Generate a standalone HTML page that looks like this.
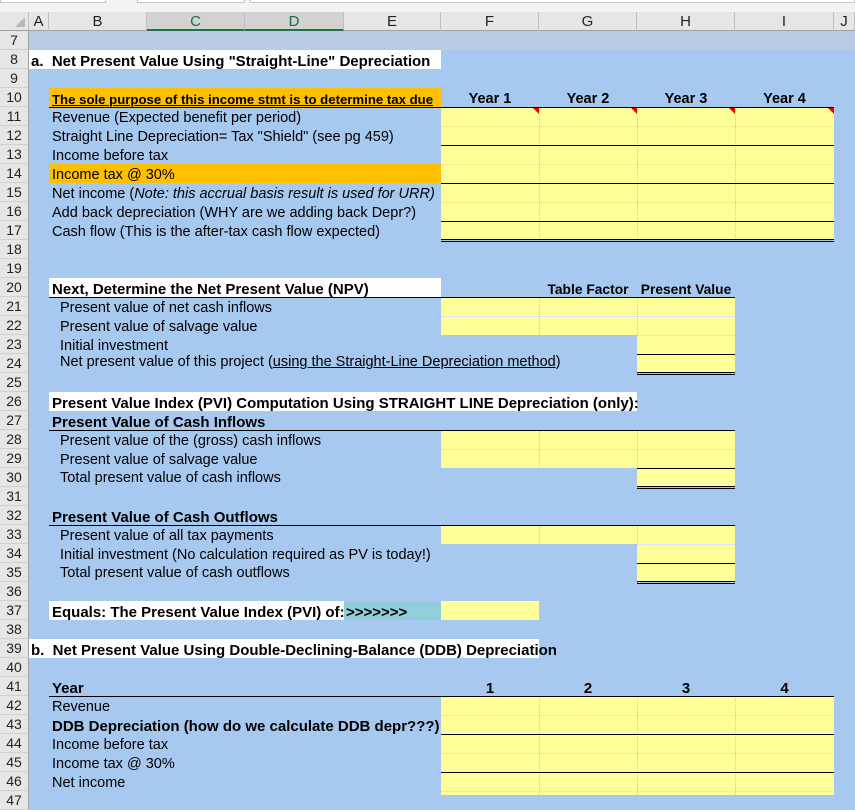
<!DOCTYPE html>
<html><head><meta charset="utf-8"><style>
*{margin:0;padding:0;box-sizing:border-box}
body{width:855px;height:795px;overflow:hidden;background:#a7c9ef;font-family:"Liberation Sans",Arial,sans-serif;position:relative;color:#000}
.a{position:absolute}
.t{position:absolute;font-size:14.5px;line-height:19px;white-space:nowrap;padding-top:2px}
.b{font-weight:bold;font-size:15px}
.y{position:absolute;background:#ffff99}
.w{position:absolute;background:#fff}
.hl{position:absolute;height:1px;background:#000}
.dl{position:absolute;height:1px;border-top:1px dotted #c8d8f0}
.vd{position:absolute;width:1px;border-left:1px dotted #c8c8c8}
.db{position:absolute;height:3px;border-top:1px solid #000;border-bottom:1px solid #000}
.rh{position:absolute;left:0;width:29px;height:19px;background:#e6e6e6;border-bottom:1px solid #d0d0d0;border-right:1px solid #a0a0a0;font-size:14px;line-height:19px;text-align:center;color:#222}
.ch{position:absolute;top:12px;height:19px;background:#e6e6e6;border-right:1px solid #c0c0c0;border-bottom:1px solid #a0a0a0;font-size:15px;line-height:19px;text-align:center;color:#222}
.tri{position:absolute;width:0;height:0;border-top:6px solid #e00;border-left:6px solid transparent}
</style></head><body>
<div class="a" style="left:0;top:0;width:855px;height:12px;background:#f3f3f3"></div>
<div class="a" style="left:0;top:0;width:106px;height:3px;background:#fff;border:1px solid #c8c8c8;border-top:none"></div>
<div class="a" style="left:137px;top:0;width:108px;height:3px;background:#fff;border:1px solid #c8c8c8;border-top:none"></div>
<div class="a" style="left:250px;top:0;width:605px;height:3px;background:#fff;border:1px solid #c8c8c8;border-top:none"></div>
<div class="ch" style="left:0;width:29px"><div class="a" style="right:3px;bottom:3px;width:0;height:0;border-bottom:10px solid #b8b8b8;border-left:10px solid transparent"></div></div>
<div class="ch" style="left:29px;width:20px">A</div>
<div class="ch" style="left:49px;width:98px">B</div>
<div class="ch" style="left:147px;width:98px;background:#d2d2d2;border-bottom:2px solid #217346;color:#1e6b3f">C</div>
<div class="ch" style="left:245px;width:99px;background:#d2d2d2;border-bottom:2px solid #217346;color:#1e6b3f">D</div>
<div class="ch" style="left:344px;width:97px">E</div>
<div class="ch" style="left:441px;width:98px">F</div>
<div class="ch" style="left:539px;width:98px">G</div>
<div class="ch" style="left:637px;width:98px">H</div>
<div class="ch" style="left:735px;width:99px">I</div>
<div class="ch" style="left:834px;width:21px">J</div>
<div class="a" style="left:29px;top:31px;width:826px;height:19px;background:#b8cce4"></div>
<div class="rh" style="top:31px">7</div><div class="rh" style="top:50px">8</div><div class="rh" style="top:69px">9</div><div class="rh" style="top:88px">10</div><div class="rh" style="top:107px">11</div><div class="rh" style="top:126px">12</div><div class="rh" style="top:145px">13</div><div class="rh" style="top:164px">14</div><div class="rh" style="top:183px">15</div><div class="rh" style="top:202px">16</div><div class="rh" style="top:221px">17</div><div class="rh" style="top:240px">18</div><div class="rh" style="top:259px">19</div><div class="rh" style="top:278px">20</div><div class="rh" style="top:297px">21</div><div class="rh" style="top:316px">22</div><div class="rh" style="top:335px">23</div><div class="rh" style="top:354px">24</div><div class="rh" style="top:373px">25</div><div class="rh" style="top:392px">26</div><div class="rh" style="top:411px">27</div><div class="rh" style="top:430px">28</div><div class="rh" style="top:449px">29</div><div class="rh" style="top:468px">30</div><div class="rh" style="top:487px">31</div><div class="rh" style="top:506px">32</div><div class="rh" style="top:525px">33</div><div class="rh" style="top:544px">34</div><div class="rh" style="top:563px">35</div><div class="rh" style="top:582px">36</div><div class="rh" style="top:601px">37</div><div class="rh" style="top:620px">38</div><div class="rh" style="top:639px">39</div><div class="rh" style="top:658px">40</div><div class="rh" style="top:677px">41</div><div class="rh" style="top:696px">42</div><div class="rh" style="top:715px">43</div><div class="rh" style="top:734px">44</div><div class="rh" style="top:753px">45</div><div class="rh" style="top:772px">46</div><div class="rh" style="top:791px">47</div>

<div class="w" style="left:29px;top:50px;width:412px;height:19px"></div>
<div class="a" style="left:49px;top:88px;width:392px;height:19px;background:#ffc000"></div>
<div class="a" style="left:49px;top:164px;width:392px;height:19px;background:#ffc000"></div>
<div class="w" style="left:49px;top:278px;width:392px;height:19px"></div>
<div class="w" style="left:49px;top:392px;width:588px;height:19px"></div>
<div class="w" style="left:49px;top:601px;width:295px;height:19px"></div>
<div class="a" style="left:344px;top:601px;width:97px;height:19px;background:#92cddc"></div>
<div class="w" style="left:29px;top:639px;width:510px;height:19px"></div>

<div class="y" style="left:441px;top:107px;width:393px;height:133px"></div>
<div class="y" style="left:441px;top:297px;width:294px;height:38px"></div>
<div class="y" style="left:637px;top:335px;width:98px;height:38px"></div>
<div class="y" style="left:441px;top:430px;width:294px;height:38px"></div>
<div class="y" style="left:637px;top:468px;width:98px;height:19px"></div>
<div class="y" style="left:441px;top:525px;width:294px;height:19px"></div>
<div class="y" style="left:637px;top:544px;width:98px;height:38px"></div>
<div class="y" style="left:441px;top:601px;width:98px;height:19px"></div>
<div class="y" style="left:441px;top:696px;width:393px;height:99px"></div>

<div class="vd" style="left:539px;top:107px;height:133px"></div>
<div class="vd" style="left:637px;top:107px;height:133px"></div>
<div class="vd" style="left:735px;top:107px;height:133px"></div>
<div class="vd" style="left:539px;top:297px;height:38px"></div>
<div class="vd" style="left:637px;top:297px;height:38px"></div>
<div class="vd" style="left:539px;top:430px;height:38px"></div>
<div class="vd" style="left:637px;top:430px;height:38px"></div>
<div class="vd" style="left:539px;top:525px;height:19px"></div>
<div class="vd" style="left:637px;top:525px;height:19px"></div>
<div class="vd" style="left:539px;top:696px;height:99px"></div>
<div class="vd" style="left:637px;top:696px;height:99px"></div>
<div class="vd" style="left:735px;top:696px;height:99px"></div>

<div class="dl" style="left:441px;top:126px;width:393px"></div>
<div class="dl" style="left:441px;top:164px;width:393px"></div>
<div class="dl" style="left:441px;top:202px;width:393px"></div>
<div class="dl" style="left:441px;top:316px;width:294px"></div>
<div class="dl" style="left:637px;top:335px;width:98px"></div>
<div class="dl" style="left:441px;top:449px;width:294px"></div>
<div class="dl" style="left:637px;top:544px;width:98px"></div>
<div class="dl" style="left:441px;top:715px;width:393px"></div>
<div class="dl" style="left:441px;top:753px;width:393px"></div>
<div class="dl" style="left:441px;top:791px;width:393px"></div>

<div class="hl" style="left:49px;top:107px;width:785px"></div>
<div class="hl" style="left:441px;top:145px;width:393px"></div>
<div class="hl" style="left:441px;top:183px;width:393px"></div>
<div class="hl" style="left:441px;top:221px;width:393px"></div>
<div class="db" style="left:441px;top:239px;width:393px"></div>
<div class="hl" style="left:49px;top:297px;width:686px"></div>
<div class="hl" style="left:637px;top:354px;width:98px"></div>
<div class="db" style="left:637px;top:372px;width:98px"></div>
<div class="hl" style="left:49px;top:430px;width:686px"></div>
<div class="hl" style="left:637px;top:468px;width:98px"></div>
<div class="db" style="left:637px;top:486px;width:98px"></div>
<div class="hl" style="left:49px;top:525px;width:686px"></div>
<div class="hl" style="left:637px;top:563px;width:98px"></div>
<div class="db" style="left:637px;top:581px;width:98px"></div>
<div class="hl" style="left:49px;top:696px;width:785px"></div>
<div class="hl" style="left:441px;top:734px;width:393px"></div>
<div class="hl" style="left:441px;top:772px;width:393px"></div>

<div class="tri" style="left:533px;top:108px"></div>
<div class="tri" style="left:631px;top:108px"></div>
<div class="tri" style="left:729px;top:108px"></div>
<div class="tri" style="left:828px;top:108px"></div>

<div class="t b" style="left:31px;top:50px">a.&nbsp;&nbsp;Net Present Value Using "Straight-Line" Depreciation</div>
<div class="t b" style="left:52px;top:88px;text-decoration:underline;font-size:13.2px">The sole purpose of this income stmt is to determine tax due</div>
<div class="t b" style="left:441px;top:88px;width:98px;text-align:center;font-size:14.5px">Year 1</div>
<div class="t b" style="left:539px;top:88px;width:98px;text-align:center;font-size:14.5px">Year 2</div>
<div class="t b" style="left:637px;top:88px;width:98px;text-align:center;font-size:14.5px">Year 3</div>
<div class="t b" style="left:735px;top:88px;width:99px;text-align:center;font-size:14.5px">Year 4</div>
<div class="t" style="left:52px;top:107px">Revenue (Expected benefit per period)</div>
<div class="t" style="left:52px;top:126px">Straight Line Depreciation= Tax "Shield" (see pg 459)</div>
<div class="t" style="left:52px;top:145px">Income before tax</div>
<div class="t" style="left:52px;top:164px">Income tax @ 30%</div>
<div class="t" style="left:52px;top:183px;width:389px;overflow:hidden">Net income (<i>Note: this accrual basis result is used for URR)</i></div>
<div class="t" style="left:52px;top:202px">Add back depreciation (WHY are we adding back Depr?)</div>
<div class="t" style="left:52px;top:221px">Cash flow (This is the after-tax cash flow expected)</div>
<div class="t b" style="left:52px;top:278px">Next, Determine the Net Present Value (NPV)</div>
<div class="t b" style="left:539px;top:278px;width:98px;text-align:center;font-size:13.8px">Table Factor</div>
<div class="t b" style="left:637px;top:278px;width:98px;text-align:center;font-size:13.8px">Present Value</div>
<div class="t" style="left:60px;top:297px">Present value of net cash inflows</div>
<div class="t" style="left:60px;top:316px">Present value of salvage value</div>
<div class="t" style="left:60px;top:335px">Initial investment</div>
<div class="t" style="left:60px;top:351px">Net present value of this project (<u>using the Straight-Line Depreciation method</u>)</div>
<div class="t b" style="left:52px;top:392px">Present Value Index (PVI) Computation Using STRAIGHT LINE Depreciation (only):</div>
<div class="t b" style="left:52px;top:411px">Present Value of Cash Inflows</div>
<div class="t" style="left:60px;top:430px">Present value of the (gross) cash inflows</div>
<div class="t" style="left:60px;top:449px">Present value of salvage value</div>
<div class="t" style="left:60px;top:467px">Total present value of cash inflows</div>
<div class="t b" style="left:52px;top:506px">Present Value of Cash Outflows</div>
<div class="t" style="left:60px;top:525px">Present value of all tax payments</div>
<div class="t" style="left:60px;top:544px">Initial investment (No calculation required as PV is today!)</div>
<div class="t" style="left:60px;top:562px">Total present value of cash outflows</div>
<div class="t b" style="left:52px;top:601px">Equals: The Present Value Index (PVI) of:</div>
<div class="t b" style="left:346px;top:601px">&gt;&gt;&gt;&gt;&gt;&gt;&gt;</div>
<div class="t b" style="left:31px;top:639px">b.&nbsp;&nbsp;Net Present Value Using Double-Declining-Balance (DDB) Depreciation</div>
<div class="t b" style="left:52px;top:677px">Year</div>
<div class="t b" style="left:441px;top:677px;width:98px;text-align:center">1</div>
<div class="t b" style="left:539px;top:677px;width:98px;text-align:center">2</div>
<div class="t b" style="left:637px;top:677px;width:98px;text-align:center">3</div>
<div class="t b" style="left:735px;top:677px;width:99px;text-align:center">4</div>
<div class="t" style="left:52px;top:696px">Revenue</div>
<div class="t b" style="left:52px;top:715px">DDB Depreciation (how do we calculate DDB depr???)</div>
<div class="t" style="left:52px;top:734px">Income before tax</div>
<div class="t" style="left:52px;top:753px">Income tax @ 30%</div>
<div class="t" style="left:52px;top:772px">Net income</div>
</body></html>
